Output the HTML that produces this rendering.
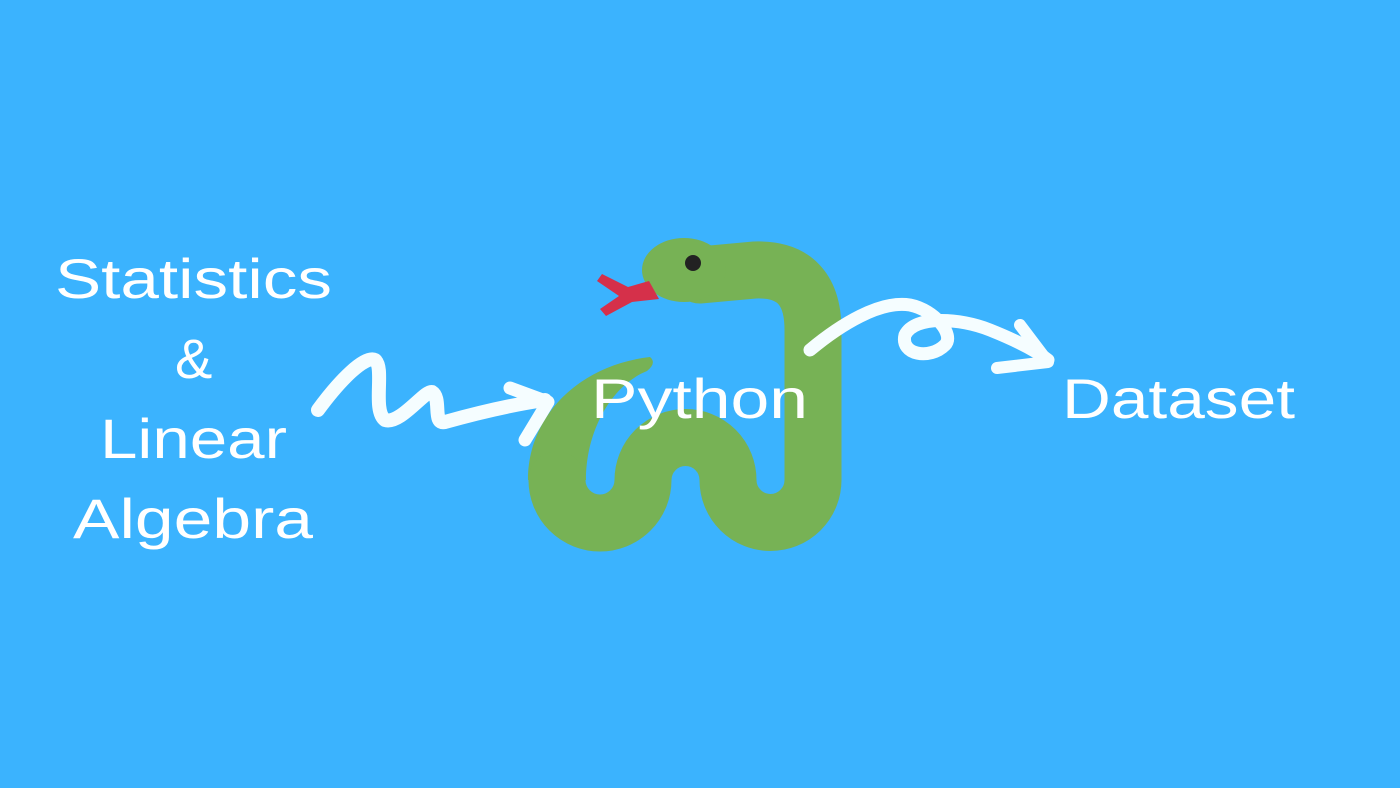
<!DOCTYPE html>
<html><head><meta charset="utf-8"><style>html,body{margin:0;padding:0;background:#3bb3fe;overflow:hidden}svg{display:block}</style></head>
<body>
<svg width="1400" height="788" viewBox="0 0 1400 788" xmlns="http://www.w3.org/2000/svg">
<rect width="1400" height="788" fill="#3bb3fe"/>
<!-- snake body -->
<path d="M650 357 C580 365 528 415 528 480 L586 480 C586 430 612 385 647 371 Q657 363 650 357 Z" fill="#77b255"/>
<path d="M557 480 A43 43 0 0 0 643 480 A42.5 42.5 0 0 1 728 480 A42.5 42.5 0 0 0 813 480 L813 330 Q813 268 755 270 L700 275" fill="none" stroke="#77b255" stroke-width="57" stroke-linecap="round"/>
<path d="M557 478 L557 482" stroke="#77b255" stroke-width="57"/>
<ellipse cx="684" cy="270" rx="42" ry="32" fill="#77b255"/>
<!-- tongue -->
<polygon points="649,281 659,299 632,302 606,316 600,309 619,296 597,281 602,274 628,287" fill="#d5304a"/>
<circle cx="693" cy="263" r="8" fill="#222"/>
<!-- left wavy arrow -->
<path d="M318 410 C340 380 365 355 375 360 C385 368 372 410 385 420 C400 425 425 390 432 392 C442 398 432 425 445 422 C470 415 510 405 545 400" fill="none" stroke="#f5fdff" stroke-width="14" stroke-linecap="round" stroke-linejoin="round"/>
<path d="M510 388 L548 402 L525 440" fill="none" stroke="#f5fdff" stroke-width="13" stroke-linecap="round" stroke-linejoin="round"/>
<!-- right loop arrow -->
<path d="M810 350 C840 325 880 300 910 305 C935 310 955 335 945 345 C930 360 900 355 905 335 C915 315 960 318 990 330 C1015 340 1035 350 1048 360" fill="none" stroke="#f5fdff" stroke-width="13" stroke-linecap="round" stroke-linejoin="round"/>
<path d="M1020 325 L1048 362 L997 368" fill="none" stroke="#f5fdff" stroke-width="12" stroke-linecap="round" stroke-linejoin="round"/>
<g fill="#ffffff" font-family="Liberation Sans, sans-serif" font-size="56">
<text x="55" y="298" textLength="277" lengthAdjust="spacingAndGlyphs">Statistics</text>
<text x="175" y="378">&amp;</text>
<text x="100" y="458" textLength="187" lengthAdjust="spacingAndGlyphs">Linear</text>
<text x="73" y="538" textLength="240" lengthAdjust="spacingAndGlyphs">Algebra</text>
<text x="591" y="418" textLength="217" lengthAdjust="spacingAndGlyphs">Python</text>
<text x="1062" y="418" textLength="233" lengthAdjust="spacingAndGlyphs">Dataset</text>
</g>
</svg>
</body></html>
